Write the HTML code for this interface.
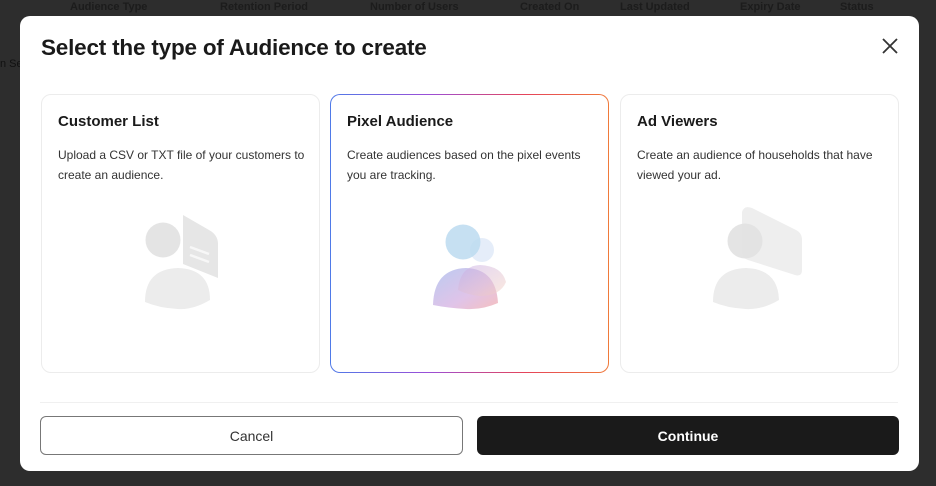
<!DOCTYPE html>
<html><head><meta charset="utf-8">
<style>
*{box-sizing:border-box;margin:0;padding:0}
html,body{width:936px;height:486px;overflow:hidden;background:#2d2d2d;font-family:"Liberation Sans",sans-serif}
.th{position:absolute;top:0;left:0;width:936px;height:16px;font-size:11px}
.th span{position:absolute;top:1px;font-weight:bold;color:#1c1c1c}
.modal{position:absolute;left:20px;top:16px;width:899px;height:455px;background:#fff;border-radius:10px}
h1{position:absolute;left:21px;top:19px;font-size:22.5px;font-weight:bold;color:#1a1a1a;letter-spacing:-0.2px}
.x{position:absolute;left:860px;top:20px;width:20px;height:20px}
.card{position:absolute;top:78px;width:279px;height:279px;border:1px solid #ececec;border-radius:10px;background:#fff}
.card h2{position:absolute;left:16px;top:18px;font-size:15px;font-weight:bold;color:#1a1a1a}
.card p{position:absolute;left:16px;top:51px;width:255px;font-size:12px;line-height:19.5px;color:#333}
.sel{border:1.5px solid transparent;background:linear-gradient(#fff,#fff) padding-box,linear-gradient(90deg,#4f7ae8,#9a4fd8 35%,#e5445a 70%,#f07a3a) border-box}
.div{position:absolute;left:20px;top:386px;width:858px;height:1px;background:#f0f0f0}
.btn{position:absolute;top:400px;height:39px;border-radius:6px;font-size:14px;display:flex;align-items:center;justify-content:center}
.cancel{left:20px;width:423px;border:1px solid #777;color:#333}
.cont{left:457px;width:422px;background:#1a1a1a;color:#fff;font-weight:bold}
.ic{position:absolute;left:-1px;top:-1px}
</style></head><body>
<div class="th">
<span style="left:70px">Audience Type</span><span style="left:220px">Retention Period</span><span style="left:370px">Number of Users</span><span style="left:520px">Created On</span><span style="left:620px">Last Updated</span><span style="left:740px">Expiry Date</span><span style="left:840px">Status</span>
</div>
<div style="position:absolute;left:0;top:58px;font-size:11px;color:#111">n Se</div>
<div class="modal">
<h1>Select the type of Audience to create</h1>
<svg class="x" viewBox="0 0 20 20"><path d="M3 3L17 17M17 3L3 17" stroke="#333" stroke-width="1.8" fill="none"/></svg>

<div class="card" style="left:21px">
<h2>Customer List</h2>
<p>Upload a CSV or TXT file of your customers to create an audience.</p>
<svg class="ic" width="279" height="279" viewBox="0 0 279 279">
<path d="M142 121 L168 136 Q177 141 177 150 L177 184 L142 170 Z" fill="#e6e6e6"/>
<circle cx="122" cy="146" r="17.5" fill="#e1e1e1" opacity=".9"/>
<path d="M149 153 L168 160 M149 161 L168 168" stroke="#f7f7f7" stroke-width="2.5"/>
<path d="M104 208 Q104 175 137 174 Q169 175 169 206 Q152 216 137 215 Q118 214 104 208Z" fill="#ececec"/>
</svg>
</div>

<div class="card sel" style="left:310px">
<h2>Pixel Audience</h2>
<p>Create audiences based on the pixel events you are tracking.</p>
<svg class="ic" width="279" height="279" viewBox="0 0 279 279">
<defs>
<linearGradient id="g1" x1="0" y1="0" x2="1" y2="1"><stop offset="0" stop-color="#b3c5ef"/><stop offset=".6" stop-color="#dcbde6"/><stop offset="1" stop-color="#f4b9b9"/></linearGradient>
<linearGradient id="g2" x1="0" y1="0" x2="1" y2="1"><stop offset="0" stop-color="#c3a9e8"/><stop offset="1" stop-color="#f7d3c0"/></linearGradient>
</defs>
<circle cx="152" cy="156" r="12" fill="#dfe8f7" opacity=".8"/>
<circle cx="133" cy="148" r="17.5" fill="#bcdaf0" opacity=".85"/>
<path d="M103 211 Q104 175 136 174 Q166 175 168 209 Q152 216 136 215 Q118 214 103 211Z" fill="url(#g1)" opacity=".9"/>
<path d="M128 196 Q130 172 150 171 Q172 172 176 188 Q170 202 150 202 Q138 201 128 196Z" fill="url(#g2)" opacity=".5"/>
</svg>
</div>

<div class="card" style="left:600px">
<h2>Ad Viewers</h2>
<p>Create an audience of households that have viewed your ad.</p>
<svg class="ic" width="279" height="279" viewBox="0 0 279 279">
<path d="M122 118 Q124 111 132 114 L176 136 Q182 139 182 146 L182 176 Q182 183 175 181 L128 166 Q122 164 122 158Z" fill="#eeeeee"/>
<circle cx="125" cy="147" r="17.5" fill="#e1e1e1" opacity=".9"/>
<path d="M93 208 Q93 175 126 174 Q158 175 159 206 Q142 216 126 215 Q107 214 93 208Z" fill="#ececec"/>
</svg>
</div>

<div class="div"></div>
<div class="btn cancel">Cancel</div>
<div class="btn cont">Continue</div>
</div>
</body></html>
